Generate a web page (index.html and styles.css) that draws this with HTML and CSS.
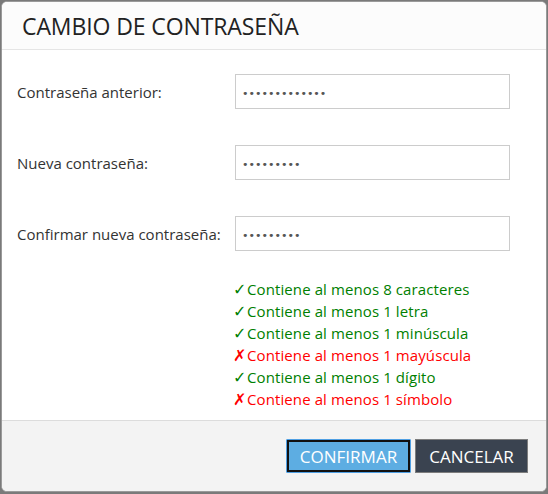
FILE: index.html
```html
<!DOCTYPE html>
<html lang="es">
<head>
<meta charset="utf-8">
<title>Cambio de contraseña</title>
<link rel="stylesheet" href="styles.css">
</head>
<body>
<div class="dialog">
  <div class="dialog-header">
    <h1 class="dialog-title">CAMBIO DE CONTRASEÑA</h1>
  </div>
  <div class="dialog-body">
    <div class="form-grid">
      <label class="field-label" for="old">Contraseña anterior:</label>
      <input class="field-input" id="old" type="password" value="1234567890123">
      <label class="field-label" for="new">Nueva contraseña:</label>
      <input class="field-input" id="new" type="password" value="123456789">
      <label class="field-label" for="confirm">Confirmar nueva contraseña:</label>
      <input class="field-input" id="confirm" type="password" value="123456789">
    </div>
    <ul class="rules">
      <li class="rule ok"><span class="mark">✓</span>Contiene al menos 8 caracteres</li>
      <li class="rule ok"><span class="mark">✓</span>Contiene al menos 1 letra</li>
      <li class="rule ok"><span class="mark">✓</span>Contiene al menos 1 minúscula</li>
      <li class="rule bad"><span class="mark">✗</span>Contiene al menos 1 mayúscula</li>
      <li class="rule ok"><span class="mark">✓</span>Contiene al menos 1 dígito</li>
      <li class="rule bad"><span class="mark">✗</span>Contiene al menos 1 símbolo</li>
    </ul>
  </div>
  <div class="dialog-footer">
    <button class="btn btn-primary" type="button">CONFIRMAR</button>
    <button class="btn btn-dark" type="button">CANCELAR</button>
  </div>
</div>
</body>
</html>
```

FILE: styles.css
```css
html, body {
  margin: 0;
  padding: 0;
}
body {
  background: #7a7a7a;
  width: 548px;
  height: 494px;
  overflow: hidden;
  font-family: "Open Sans", "Noto Sans", "DejaVu Sans", sans-serif;
  color: #333;
}
.dialog {
  margin: 1px 1px 0 1px;
  width: 544px;
  height: 489px;
  border: 1px solid #9a9a9a;
  border-radius: 6px;
  background: #fff;
  overflow: hidden;
  display: flex;
  flex-direction: column;
}
.dialog-header {
  height: 47px;
  border-bottom: 1px solid #e5e5e5;
  background: #fcfcfc;
  padding-left: 20px;
  display: flex;
  align-items: center;
}
.dialog-title {
  margin: 0;
  font-weight: 400;
  font-size: 23px;
  letter-spacing: -0.1px;
  color: #222;
}
.dialog-body {
  flex: 1;
  padding: 24px 0 0 15px;
}
.form-grid {
  display: grid;
  grid-template-columns: 218px 275px;
  row-gap: 36px;
  align-items: center;
}
.field-label {
  font-size: 15px;
  color: #333;
  white-space: nowrap;
}
.field-input {
  box-sizing: border-box;
  height: 35px;
  width: 275px;
  border: 1px solid #ccc;
  padding: 3px 6px 0 6px;
  font-family: "DejaVu Sans", sans-serif;
  font-size: 11px;
  letter-spacing: 0;
  color: #555;
  outline: none;
}
.rules {
  list-style: none;
  margin: 27px 0 0 216px;
  padding: 0;
}
.rule {
  font-size: 15px;
  letter-spacing: 0.1px;
  line-height: 22px;
  height: 22px;
  white-space: nowrap;
}
.rule.ok { color: #008000; }
.rule.bad { color: #ff0000; }
.mark {
  display: inline-block;
  width: 14px;
  font-family: "DejaVu Sans", sans-serif;
  font-weight: 700;
  font-size: 16px;
  letter-spacing: 0;
}
.dialog-footer {
  height: 70px;
  border-top: 1px solid #dcdcdc;
  background: #f3f3f3;
  display: flex;
  justify-content: flex-end;
  align-items: center;
  gap: 4px;
  padding-right: 18px;
}
.btn {
  box-sizing: border-box;
  height: 34px;
  font-family: "Open Sans", "Noto Sans", sans-serif;
  font-size: 17px;
  color: #fff;
  border-radius: 0;
  cursor: pointer;
  padding: 0;
}
.btn-primary {
  width: 125px;
  background: #5dade2;
  border: 1px solid #4f9fe3;
  border-radius: 1px;
  box-shadow: inset 0 0 0 2px #111;
}
.btn-dark {
  width: 113px;
  background: #3a4350;
  border: 1px solid #7d7d7d;
}
```
